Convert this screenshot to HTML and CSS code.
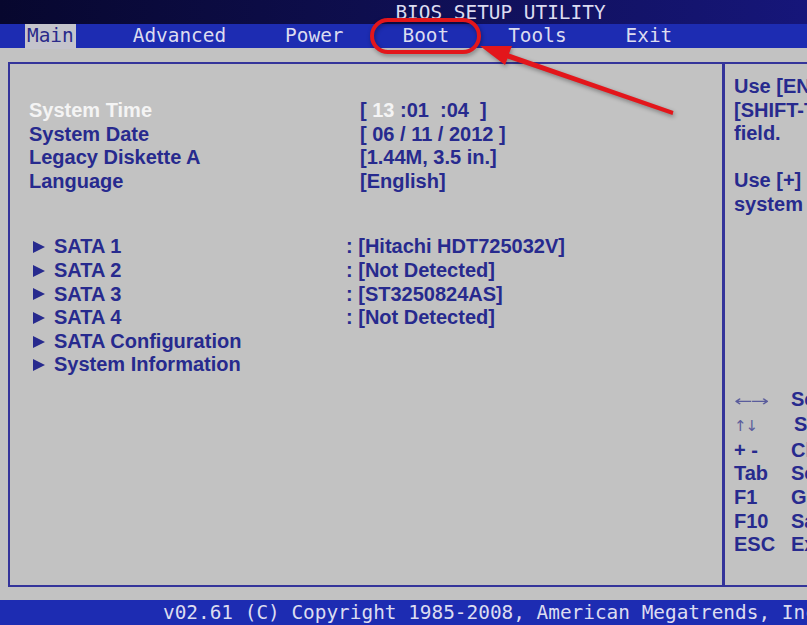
FILE: index.html
```html
<!DOCTYPE html>
<html lang="en">
<head>
    <meta charset="UTF-8">
    <meta name="viewport" content="width=device-width, initial-scale=1.0">
    <title>BIOS Setup Utility</title>
    <link rel="stylesheet" href="styles.css">
</head>
<body>
    <div class="screen">
        <div class="title-bar">
            <span class="title">BIOS SETUP UTILITY</span>
        </div>

        <div class="menu-bar">
            <span class="menu-item active">Main</span>
            <span class="menu-item">Advanced</span>
            <span class="menu-item">Power</span>
            <span class="menu-item">Boot</span>
            <span class="menu-item">Tools</span>
            <span class="menu-item">Exit</span>
        </div>

        <div class="frame">
            <div class="main-panel">
                <div class="settings">
                    <span class="label selected">System Time</span>
                    <span class="value">[ <span class="selected">13</span> :01&nbsp;&nbsp;:04&nbsp;&nbsp;]</span>

                    <span class="label">System Date</span>
                    <span class="value">[ 06 / 11 / 2012 ]</span>

                    <span class="label">Legacy Diskette A</span>
                    <span class="value">[1.44M, 3.5 in.]</span>

                    <span class="label">Language</span>
                    <span class="value">[English]</span>
                </div>

                <ul class="submenus">
                    <li><span class="pointer"></span><span class="sub-label">SATA 1</span><span>: [Hitachi HDT725032V]</span></li>
                    <li><span class="pointer"></span><span class="sub-label">SATA 2</span><span>: [Not Detected]</span></li>
                    <li><span class="pointer"></span><span class="sub-label">SATA 3</span><span>: [ST3250824AS]</span></li>
                    <li><span class="pointer"></span><span class="sub-label">SATA 4</span><span>: [Not Detected]</span></li>
                    <li><span class="pointer"></span><span class="sub-label">SATA Configuration</span></li>
                    <li><span class="pointer"></span><span class="sub-label">System Information</span></li>
                </ul>
            </div>

            <div class="help-panel">
                <p class="help-text">Use [ENTER], [TAB] or<br>[SHIFT-TAB] to select a<br>field.</p>
                <p class="help-text">Use [+] or [-] to configure<br>system Time.</p>

                <div class="keys">
                    <span class="key"><span class="arrows wide">&larr;&rarr;</span></span><span>Select Screen</span>
                    <span class="key"><span class="arrows">&uarr;&darr;</span></span><span class="nudge">Select Item</span>
                    <span class="key">+ -</span><span>Change Field</span>
                    <span class="key">Tab</span><span>Select Field</span>
                    <span class="key">F1</span><span>General Help</span>
                    <span class="key">F10</span><span>Save and Exit</span>
                    <span class="key">ESC</span><span>Exit</span>
                </div>
            </div>
        </div>

        <div class="status-bar">v02.61 (C) Copyright 1985-2008, American Megatrends, Inc.</div>

        <svg class="annotation" width="807" height="625" viewBox="0 0 807 625">
            <rect x="372" y="20" width="107" height="32" rx="16" fill="none" stroke="#e3161b" stroke-width="4"/>
            <polygon fill="#e3161b" points="480,46 512,46 509,53.5 673.5,111 672.5,115 507.5,58.5 505,65"/>
        </svg>
    </div>
</body>
</html>
```

FILE: styles.css
```css
body {
    margin: 0;
    background-color: #c2c2c2;
    font-family: "Liberation Sans", Arial, sans-serif;
}

.screen {
    position: relative;
    width: 807px;
    height: 625px;
    overflow: hidden;
    display: flex;
    flex-direction: column;
}

.title-bar {
    height: 24px;
    background: linear-gradient(to right, #07072e, #0e0e4e 45%, #16167a);
    text-align: center;
    overflow: hidden;
}

.title,
.menu-item,
.status-bar {
    font-family: "DejaVu Sans Mono", "Liberation Mono", monospace;
    font-size: 19.4px;
    color: #dcdcf0;
}

.title {
    display: inline-block;
    margin-left: 194px;
    line-height: 22px;
    padding-top: 2px;
}

.menu-bar {
    height: 24px;
    background-color: #1d2cb2;
    display: flex;
    gap: 55px;
    padding-left: 25px;
}

.menu-item {
    padding: 0 2px;
    line-height: 24px;
}

.menu-item.active {
    background-color: #c4c4cc;
    color: #2a2a8a;
    height: 25px;
}

.frame {
    margin: 14px 0 0 8px;
    width: 900px;
    height: 521px;
    border: 2px solid #34349a;
    border-right: none;
    display: flex;
    color: #272a8e;
    font-weight: bold;
    font-size: 20px;
    line-height: 23.6px;
}

.main-panel {
    flex-shrink: 0;
    width: 693px;
    padding: 35px 0 0 19px;
    border-right: 3px solid #34349a;
}

.settings {
    display: grid;
    grid-template-columns: 331px auto;
    white-space: nowrap;
}

.selected {
    color: #f4f4f4;
}

.submenus {
    list-style: none;
    margin: 42px 0 0 0;
    padding: 0;
}

.submenus li {
    display: flex;
    align-items: center;
    white-space: nowrap;
}

.pointer {
    width: 0;
    height: 0;
    margin: 0 9px 0 4px;
    border-left: 12px solid #272a8e;
    border-top: 6px solid transparent;
    border-bottom: 6px solid transparent;
}

.sub-label {
    width: 292px;
}

.help-panel {
    padding: 11px 0 0 9px;
    white-space: nowrap;
}

.help-text {
    margin: 0 0 23.6px 0;
}

.keys {
    display: grid;
    grid-template-columns: 57px auto;
    margin-top: 171px;
}

.arrows {
    display: inline-block;
    font-family: "DejaVu Sans", sans-serif;
    font-weight: normal;
    font-size: 15px;
    color: #5a5c9c;
    letter-spacing: -1px;
    transform-origin: left center;
}

.arrows.wide {
    transform: scaleX(1.45);
}

.nudge {
    padding-left: 3px;
}

.status-bar {
    margin-top: 13px;
    height: 25px;
    line-height: 25px;
    background-color: #1d2cb2;
    padding-left: 163px;
    white-space: nowrap;
    overflow: hidden;
}

.annotation {
    position: absolute;
    top: 0;
    left: 0;
    pointer-events: none;
    filter: drop-shadow(1px 2px 2px rgba(0, 0, 0, 0.35));
}
```
